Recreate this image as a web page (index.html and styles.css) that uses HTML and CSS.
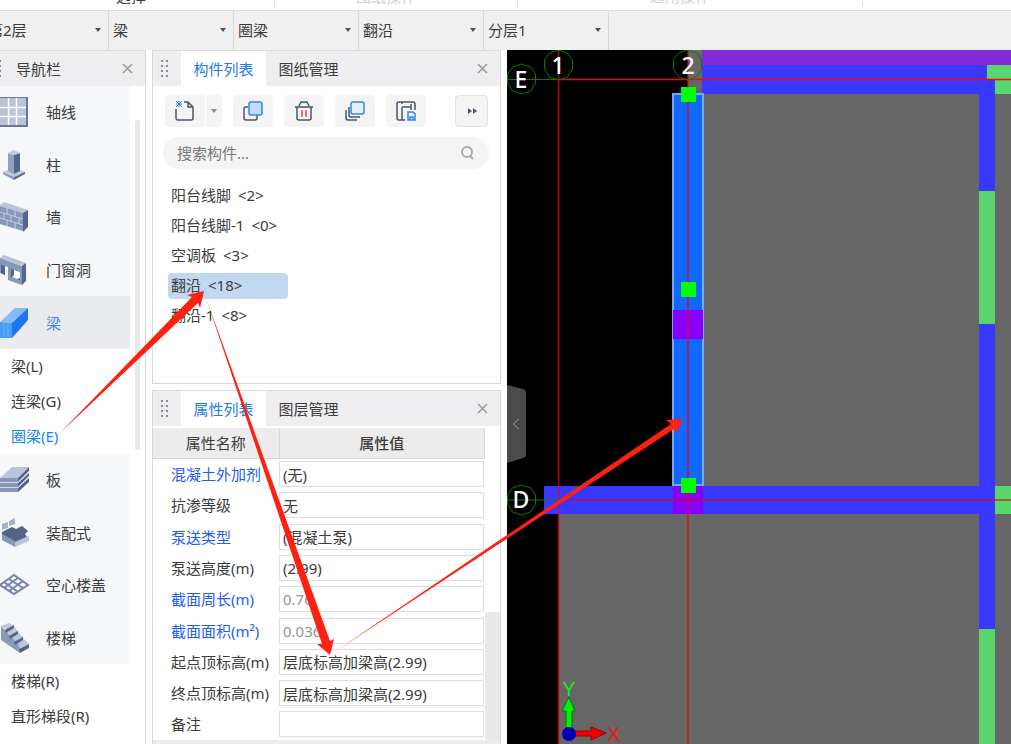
FILE: index.html
```html
<!DOCTYPE html>
<html lang="zh-CN">
<head>
<meta charset="utf-8">
<title>构件建模</title>
<link rel="stylesheet" href="styles.css">
</head>
<body>
<div class="app">
  <header class="ribbon">
    <div class="ribbon-group ribbon-select"><span>选择</span></div>
    <div class="ribbon-group ribbon-drawing"><span>图纸操作</span></div>
    <div class="ribbon-group ribbon-common"><span>通用操作</span></div>
    <div class="ribbon-rest"></div>
  </header>

  <div class="filters">
    <div class="filter"><select aria-label="楼层"><option>第2层</option></select></div>
    <div class="filter"><select aria-label="构件大类"><option>梁</option></select></div>
    <div class="filter"><select aria-label="构件类型"><option>圈梁</option></select></div>
    <div class="filter"><select aria-label="构件"><option>翻沿</option></select></div>
    <div class="filter"><select aria-label="分层"><option>分层1</option></select></div>
  </div>

  <main class="workspace">
    <nav class="nav">
      <div class="panel-head nav-head">
        <svg class="grip" viewBox="0 0 8 18"><path d="M0 1h2M5 1h2M0 6h2M5 6h2M0 11h2M5 11h2M0 16h2M5 16h2"/></svg>
        <h2>导航栏</h2>
        <button class="close" aria-label="关闭导航栏"><svg viewBox="0 0 11 11"><path d="M1 1l9 9M10 1l-9 9"/></svg></button>
      </div>
      <div class="nav-body">
        <div class="nav-list">
          <div class="group group-upper">
            <button class="category">
              <svg viewBox="0 0 28 32"><path fill="#667799" d="M0 1h28v30H0z"/><path fill="#b9c3d9" d="M0 2h26v27H0z"/><path d="M8.500 2v27M16.500 2v27M0 11.500h26M0 20.500h26" stroke="#fff" stroke-width="1.500"/></svg>
              <span>轴线</span></button>
            <button class="category">
              <svg viewBox="0 0 28 32"><path fill="#c0cadb" d="M3 23l11-5 11 5-11 5z"/><path fill="#8798b8" d="M3 23l11 5v3L3 25z"/><path fill="#586a8e" d="M14 28l11-5v2l-11 6z"/><path fill="#92a1c0" d="M8 4l6 2v19l-6-3z"/><path fill="#536487" d="M14 6l6-2v18l-6 3z"/><path fill="#c0cadb" d="M8 4l6-3 6 3-6 2z"/></svg>
              <span>柱</span></button>
            <button class="category">
              <svg viewBox="0 0 28 32"><path fill="#b9c3d9" d="M0 4l4-3 24 8-5 3L0 5z"/><path fill="#8797b8" d="M0 5l23 7v18L0 23z"/><path fill="#52658d" d="M23 12l5-3v17l-5 5z"/><path d="M0 11l23 7M0 17l23 7M7 7v6M15 10v6M4 12v6M11 15v6M19 17v6M7 19v6M15 22v6" stroke="#c6cfdf" stroke-width="1"/></svg>
              <span>墙</span></button>
            <button class="category">
              <svg viewBox="0 0 28 32"><path fill="#8797b8" d="M0 4l22 8v19L8 26V13l-3-1v9l-5-2z"/><path fill="#b9c3d9" d="M0 4l4-3 22 8-4 3z"/><path fill="#52658d" d="M22 12l4-3v18l-4 4zM1 11l4 1v9l-4-2z"/><path fill="#52658d" d="M11 15l9 3v8l-9-3z"/><path fill="#fff" d="M14 16l6 2v6l-3 1-5-2 2-2z"/></svg>
              <span>门窗洞</span></button>
            <button class="category is-active">
              <svg viewBox="0 0 28 32"><path fill="#85baf5" d="M0 15L15 1h13L12 16z"/><path fill="#469bf2" d="M0 15l12 1v15H0z"/><path fill="#1e75f0" d="M12 16L28 1v12L12 31z"/><path d="M4 16v14M8 16v14" stroke="#70b1f7"/></svg>
              <span>梁</span></button>
          </div>
          <button class="sub">梁(L)</button>
          <button class="sub">连梁(G)</button>
          <button class="sub is-current">圈梁(E)</button>
          <div class="group group-lower">
            <button class="category">
              <svg viewBox="0 0 30 32"><path fill="#b9c3d9" d="M0 14L12 3h17L18 14z"/><path fill="#8797b8" d="M0 14h18v4H0zM0 19h18v4H0zM0 24h18v4H0z"/><path fill="#536487" d="M18 14L29 3v4L18 18zM18 19L29 9v3L18 23zM18 24L29 14v4L18 28z"/><path d="M0 18.500h18L29 7.500M0 23.500h18L29 12.500" stroke="#d4dbe8" fill="none"/></svg>
              <span>板</span></button>
            <button class="category">
              <svg viewBox="0 0 30 32"><path fill="#a5b1c9" d="M2 7l6-2v6l-6 2zM9 4l6-3v6L9 9z"/><path fill="#536487" d="M2 15l10-5 4 2 6-3 6 5-3 3 2 3-13 6L2 18z"/><path fill="#8797b8" d="M2 17l13 7v6L2 23z"/><path fill="#b9c3d9" d="M15 25l14-6v5l-14 6z"/></svg>
              <span>装配式</span></button>
            <button class="category">
              <svg viewBox="0 0 30 32"><path fill="#f5f7f9" stroke="#7486aa" stroke-width="2" d="M0 16L14 6l14 10-14 9z"/><path d="M4 13l14 10M9 10l14 9M4 19L18 9M9 22l14-10" stroke="#7486aa" stroke-width="2"/></svg>
              <span>空心楼盖</span></button>
            <button class="category">
              <svg viewBox="0 0 30 32"><path fill="#8c9aba" d="M1 4l19 19v8L1 18z"/><path fill="#bdc7da" d="M1 4l8-3 5 3-7 4zM7 9l7-4 5 5-7 4zM12 15l7-4 5 5-7 4zM17 21l7-4 5 5-9 4z"/><path fill="#536487" d="M5 8l9-5v3l-8 5zM9 14l9-5v3l-8 5zM14 20l9-5v3l-8 5zM19 27l10-5v4l-9 5z"/></svg>
              <span>楼梯</span></button>
          </div>
          <button class="sub">楼梯(R)</button>
          <button class="sub">直形梯段(R)</button>
        </div>
        <div class="nav-scroll"><div class="nav-thumb"></div></div>
      </div>
    </nav>

    <div class="panels">
      <section class="panel components">
        <div class="panel-head">
          <svg class="grip" viewBox="0 0 8 18"><path d="M0 1h2M5 1h2M0 6h2M5 6h2M0 11h2M5 11h2M0 16h2M5 16h2"/></svg>
          <button class="tab is-active">构件列表</button>
          <button class="tab">图纸管理</button>
          <button class="close" aria-label="关闭构件列表"><svg viewBox="0 0 11 11"><path d="M1 1l9 9M10 1l-9 9"/></svg></button>
        </div>
        <div class="toolbar">
          <div class="split">
            <button class="tool" aria-label="新建"><svg viewBox="0 0 24 24"><path d="M3 10v9q0 2 2 2h13q2 0 2-2V8l-5-5h-4M15 3v5h5"/><path class="blue thin" d="M3 2l6 6M9 2L3 8M6 2v6M3 5h6"/></svg></button>
            <button class="tool drop" aria-label="新建选项"><svg viewBox="0 0 8 8"><path class="solid-gray" d="M1 2h6L4 6z"/></svg></button>
          </div>
          <button class="tool" aria-label="复制"><svg viewBox="0 0 24 24"><path d="M7 8H5q-2 0-2 2v9q0 2 2 2h9q2 0 2-2v-3"/><rect class="blue fill-mid" x="8" y="3" width="13" height="13" rx="2"/></svg></button>
          <button class="tool" aria-label="删除"><svg viewBox="0 0 24 24"><path d="M3 8h18M5 8v11q0 2 2 2h10q2 0 2-2V8M7 7l2-4h6l2 4"/><path class="red" d="M10 11v7M14 11v7"/></svg></button>
          <button class="tool" aria-label="层间复制"><svg viewBox="0 0 24 24"><path d="M6 8v8q0 2 2 2h9M3 11v8q0 2 2 2h9"/><rect class="blue fill-light" x="8" y="3" width="13" height="12" rx="2"/></svg></button>
          <button class="tool" aria-label="存档"><svg viewBox="0 0 24 24"><path d="M21 11V5q0-2-2-2H5q-2 0-2 2v14q0 2 2 2h6M8 8v13M8 8h9M17 5v6M8 3v2"/><path class="blue fill-light" d="M14 13h5l2 2v6h-7zM16 21v-3h3v3"/></svg></button>
          <button class="tool more" aria-label="更多"><svg viewBox="0 0 12 12"><path class="solid-dark" d="M2 3l4 3-4 3zM7 3l4 3-4 3z"/></svg></button>
        </div>
        <label class="search">
          <input type="text" placeholder="搜索构件..." aria-label="搜索构件">
          <svg viewBox="0 0 14 14"><circle cx="7" cy="6" r="5"/><path d="M10 10l3 3"/></svg>
        </label>
        <div class="items">
          <button class="item">阳台线脚<span class="count">&lt;2&gt;</span></button>
          <button class="item">阳台线脚-1<span class="count">&lt;0&gt;</span></button>
          <button class="item">空调板<span class="count">&lt;3&gt;</span></button>
          <button class="item is-selected">翻沿<span class="count">&lt;18&gt;</span></button>
          <button class="item">翻沿-1<span class="count">&lt;8&gt;</span></button>
        </div>
      </section>

      <section class="panel properties">
        <div class="panel-head">
          <svg class="grip" viewBox="0 0 8 18"><path d="M0 1h2M5 1h2M0 6h2M5 6h2M0 11h2M5 11h2M0 16h2M5 16h2"/></svg>
          <button class="tab is-active">属性列表</button>
          <button class="tab">图层管理</button>
          <button class="close" aria-label="关闭属性列表"><svg viewBox="0 0 11 11"><path d="M1 1l9 9M10 1l-9 9"/></svg></button>
        </div>
        <div class="props-body">
          <table class="props">
            <thead><tr><th class="name-col">属性名称</th><th class="value-col">属性值</th></tr></thead>
            <tbody>
              <tr><td class="shared"><label for="p1">混凝土外加剂</label></td><td><input id="p1" value="(无)"></td></tr>
              <tr><td><label for="p2">抗渗等级</label></td><td><input id="p2" value="无"></td></tr>
              <tr><td class="shared"><label for="p3">泵送类型</label></td><td><input id="p3" value="(混凝土泵)"></td></tr>
              <tr><td><label for="p4">泵送高度(m)</label></td><td><input id="p4" value="(2.99)"></td></tr>
              <tr><td class="shared"><label for="p5">截面周长(m)</label></td><td><input id="p5" value="0.76" readonly></td></tr>
              <tr><td class="shared"><label for="p6">截面面积(m²)</label></td><td><input id="p6" value="0.036" readonly></td></tr>
              <tr><td><label for="p7">起点顶标高(m)</label></td><td><input id="p7" value="层底标高加梁高(2.99)"></td></tr>
              <tr><td><label for="p8">终点顶标高(m)</label></td><td><input id="p8" value="层底标高加梁高(2.99)"></td></tr>
              <tr><td><label for="p9">备注</label></td><td><input id="p9" value=""></td></tr>
            </tbody>
          </table>
          <div class="props-scroll"><div class="props-thumb"></div></div>
        </div>
        <div class="props-foot"></div>
      </section>
    </div>

    <section class="viewport">
      <svg class="plan" role="img" aria-label="平面图">
        <g transform="translate(-507 -50)">
          <path class="slab" d="M688 50h1400v444H688zM559 500h1600v900H559z"/>
          <path class="wall-top" d="M702 50h1400v15H702z"/>
          <path class="beam" d="M702 65h1400v29H702zM544 486h451v28H544zM979 79h16v1300h-16z"/>
          <path class="opening" d="M987 65h1100v14H987zM995 79h1100v15H995zM979 191h16v133h-16zM979 629h16v900h-16zM995 486h1100v28H995z"/>
          <rect class="selected-beam" x="673" y="94" width="30" height="391"/>
          <path class="joint" d="M673 310h30v29h-30zM673 486h30v28h-30z"/>
          <path class="axis-soft" d="M558.500 50v1400M688 50v1400M559 500h1600"/>
          <path class="axis-bright" d="M559 79.500h1600"/>
          <path class="axis-green" d="M507 79.500h52M507 500h52"/>
          <g class="bubble">
            <path id="ring" d="M558.500 50l9 3 5 7 0 9-5 8-9 3-9-3-5-8 0-9 5-7z"/>
            <use href="#ring" x="129"/><use href="#ring" x="-37" y="14"/><use href="#ring" x="-37" y="435"/>
          </g>
          <g class="bubble-text">
            <text x="558" y="74">1</text><text x="688" y="74">2</text><text x="521" y="88">E</text><text x="521" y="508">D</text>
          </g>
          <path class="handle-point" d="M681 87h15v15h-15zM681 282h15v15h-15zM681 478h15v15h-15z"/>
          <path fill="#00f000" stroke="#087808" stroke-width="1" d="M566 732v-21h-4l7-14 6 14h-3v21z"/>
          <path fill="#f00000" stroke="#900" stroke-width="1" d="M570 731h21v-4l15 6-15 7v-4h-21z"/>
          <circle cx="569" cy="734" r="7" fill="#0000b4"/>
          <text class="coord coord-y" x="569" y="696">Y</text>
          <text class="coord coord-x" x="614" y="741">X</text>
        </g>
      </svg>
      <button class="collapse" aria-label="收起面板"><svg viewBox="0 0 20 78"><path fill="#4b4b4b" d="M0 0l16 4q3 1 3 4v61q0 3-3 4L0 78z"/><path d="M12 34l-6 5 6 5" fill="none" stroke="#919191" stroke-width="1"/></svg></button>
    </section>
  </main>

  <svg class="callouts" aria-hidden="true">
    <path d="M60 433L192 297l-5-2 17-4-4 17-2-5z"/>
    <path d="M206 298L330 641l4-2-4 16-13-11 5 0z"/>
    <path d="M333 653L671 424l-5-4 17-1-7 15-2-5z"/>
  </svg>
</div>
</body>
</html>
```

FILE: styles.css
```css
* { box-sizing: border-box; }

body {
  margin: 0;
  background: #fff;
  color: #3c3c3c;
  font: 15px/20px "Noto Sans", "Noto Sans CJK SC", sans-serif;
}

button, input, select {
  margin: 0;
  padding: 0;
  border: 0;
  background: none;
  color: inherit;
  font: inherit;
}

svg { display: block; flex: none; }

.app {
  position: relative;
  display: flex;
  flex-direction: column;
  height: 100vh;
  overflow: hidden;
}

.ribbon {
  display: flex;
  flex: none;
  height: 10px;
}
.ribbon-group {
  display: flex;
  align-items: flex-end;
  justify-content: center;
  height: 6px;
  padding-right: 20px;
  border-right: 1px solid #ddd;
}
.ribbon-select { width: 275px; padding-right: 12px; }
.ribbon-drawing { width: 243px; color: #d0d0d0; }
.ribbon-common { width: 345px; color: #d0d0d0; }

/* Filter bar */
.filters {
  display: flex;
  flex: none;
  height: 40px;
  margin-left: -16px;
  background: #f0f0f0;
  border-top: 1px solid #dcdcdc;
}
.filter {
  position: relative;
  width: 125px;
  border-right: 1px solid #d8d8d8;
}
.filter select {
  width: 100%;
  height: 100%;
  padding: 0 0 2px 4px;
  appearance: none;
}
.filter::after {
  content: "";
  position: absolute;
  top: 17px;
  right: 7px;
  border: 3px solid transparent;
  border-top: 4px solid #4b5260;
  border-bottom: 0;
  pointer-events: none;
}

.workspace { display: flex; flex: 1; min-height: 0; }

/* Shared panel header */
.panel-head {
  display: flex;
  flex: none;
  align-items: center;
  height: 36px;
  background: #eeeef0;
  border-top: 1px solid #dcdcdc;
}
.panel-head h2 { margin: 0; font-size: 15px; font-weight: 400; }
.grip { width: 8px; height: 18px; }
.grip path { stroke: #8b8b8b; stroke-width: 2; }
.close { margin-left: auto; padding: 4px; }
.close svg { width: 11px; height: 11px; }
.close path { stroke: #999; stroke-width: 1.5; }

/* Navigation */
.nav {
  display: flex;
  flex: none;
  flex-direction: column;
  width: 146px;
  border-right: 1px solid #d8d8d8;
}
.nav-head { padding-right: 8px; }
.nav-head .grip { margin-left: -6px; }
.nav-head h2 { margin-left: 14px; }
.nav-body { display: flex; flex: 1; min-height: 0; }
.nav-list { width: 130px; overflow: hidden; }
.nav-scroll { padding: 34px 5px 0; }
.nav-thumb { width: 5px; height: 330px; border-radius: 3px; background: #e8e8ea; }
.group { display: grid; grid-auto-rows: 1fr; background: #f5f7f9; }
.group-upper { height: 263px; }
.group-lower { height: 210px; }
.category {
  display: grid;
  grid-template-columns: 46px 1fr;
  align-items: center;
  text-align: left;
}
.category svg { height: 32px; }
.category.is-active { background: #eaebef; color: #4c84e6; }
.sub {
  display: block;
  width: 100%;
  height: 35px;
  padding: 0 0 2px 11px;
  text-align: left;
}
.sub.is-current { color: #1684fc; }

/* Middle panels */
.panels {
  display: flex;
  flex: none;
  flex-direction: column;
  gap: 6px;
  width: 349px;
  margin: 0 6px;
}
.panel { display: flex; flex-direction: column; border: 1px solid #d8d8d8; border-top: 0; }
.components { flex: none; height: 334px; }
.properties { flex: 1; min-height: 0; border-bottom: 0; }
.panel .panel-head { padding: 0 8px; }
.panel .tab { align-self: stretch; width: 85px; }
.panel .grip + .tab { margin-left: 12px; }
.tab.is-active { background: #fff; color: #1f7bea; }

.toolbar { display: flex; gap: 11px; padding: 9px 12px 10px; }
.split { display: flex; gap: 1px; }
.tool {
  display: grid;
  place-items: center;
  width: 40px;
  height: 32px;
  border-radius: 4px;
  background: #f4f4f4;
}
.tool svg { width: 24px; height: 24px; fill: none; stroke: #4d5468; stroke-width: 1.5; }
.tool.drop { width: 16px; }
.tool.drop svg { width: 8px; height: 8px; }
.tool.more { width: 33px; margin-left: auto; border: 1px solid #e2e2e2; }
.tool.more svg { width: 12px; height: 12px; }
.tool .blue { stroke: #2f86ea; }
.tool .thin { stroke-width: 1; }
.tool .red { stroke: #e04444; }
.tool .fill-mid { fill: #c6dbf5; }
.tool .fill-light { fill: #e4f0ff; }
.tool .solid-gray { fill: #8b8b8b; stroke: none; }
.tool .solid-dark { fill: #4d5468; stroke: none; }

.search {
  display: flex;
  align-items: center;
  height: 32px;
  margin: 0 11px 0 10px;
  padding: 0 15px 0 14px;
  border-radius: 16px;
  background: #f4f4f4;
}
.search input { flex: 1; min-width: 0; outline: 0; }
.search input::placeholder { color: #777; opacity: 1; }
.search svg { width: 14px; height: 14px; fill: none; stroke: #aaa; stroke-width: 2; }

.items { display: flex; flex-direction: column; gap: 4px; padding: 14px 15px; }
.item {
  display: flex;
  align-items: center;
  gap: 7px;
  width: 120px;
  height: 26px;
  padding: 0 0 2px 3px;
  border-radius: 4px;
  white-space: nowrap;
}
.item.is-selected { background: #c1d8f0; }

/* Properties */
.props-body { display: flex; flex: none; padding-top: 2px; }
.props {
  width: 332px;
  height: 312px;
  border-collapse: collapse;
  table-layout: fixed;
}
.props th {
  height: 30px;
  padding: 0;
  background: #ececec;
  border-right: 1px solid #d8d8d8;
  border-bottom: 1px solid #d8d8d8;
}
.props .name-col { width: 126px; font-weight: 400; }
.props .value-col { font-weight: 500; }
.props td { padding: 0 1px 0 0; white-space: nowrap; }
.props td:first-child { padding-left: 18px; }
.props .shared { color: #245cf5; }
.props input {
  display: block;
  width: 100%;
  height: 26px;
  padding: 0 3px;
  border: 1px solid #dedede;
}
.props input:read-only { color: #949494; }
.props-scroll { display: flex; flex: 1; flex-direction: column; justify-content: flex-end; }
.props-thumb { height: 128px; border-radius: 3px 3px 0 0; background: #e9e9e9; }
.props-foot { flex: 1; background: #ececec; }

/* Model view */
.viewport { position: relative; flex: 1; min-width: 0; background: #000; overflow: hidden; }
.plan { width: 100%; height: 100%; }
.slab { fill: #666; }
.wall-top { fill: #8429d8; }
.beam { fill: #3838ff; }
.opening { fill: #5ad66e; }
.selected-beam { fill: #1068ff; stroke: #7ba5f8; stroke-width: 2; }
.joint { fill: #8800ff; }
.axis-soft { stroke: #e80010; stroke-opacity: 0.8; stroke-width: 1.5; }
.axis-bright { stroke: #ff0010; stroke-width: 1.5; }
.axis-green { stroke: #008000; }
.bubble { fill: none; stroke: #008000; }
.bubble-text { fill: #fff; font-size: 23px; font-weight: 500; text-anchor: middle; }
.handle-point { fill: #00ff00; }
.coord { font-family: "Liberation Sans", sans-serif; font-size: 20px; text-anchor: middle; }
.coord-x { fill: #f01818; }
.coord-y { fill: #18e818; }
.collapse { position: absolute; top: 335px; left: 0; }
.collapse svg { width: 20px; height: 78px; }

.callouts {
  position: absolute;
  inset: 0;
  width: 100%;
  height: 100%;
  fill: #ff2010;
  pointer-events: none;
}
```
